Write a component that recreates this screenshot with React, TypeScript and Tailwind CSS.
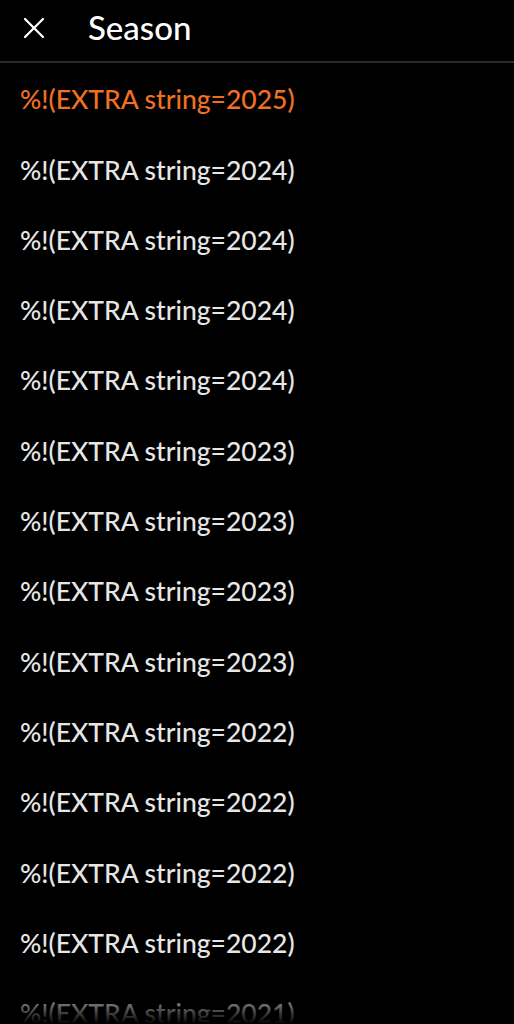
import { X } from 'lucide-react';

const seasons = [
  '2025', '2024', '2024', '2024', '2024', '2023', '2023', '2023', '2023',
  '2022', '2022', '2022', '2022', '2021', '2021',
];

export default function App() {
  return (
    <div className="relative h-[1024px] w-full overflow-hidden bg-black font-['Lato','Liberation_Sans',sans-serif]">
      <header className="flex h-[63px] items-center border-b-2 border-[#2a2a2a] pb-[6px]">
        <button type="button" className="ml-[16px] flex h-9 w-9 items-center justify-center text-white">
          <X size={36} strokeWidth={1.5} />
        </button>
        <h1 className="ml-[36px] text-[33px] font-medium text-white">Season</h1>
      </header>

      <ul className="pt-[2px]">
        {seasons.map((year, i) => (
          <li
            key={i}
            className={
              'flex h-[70.3px] items-center px-5 text-[26.5px] font-medium ' +
              (i === 0 ? 'text-[#f07022]' : 'text-[#e6e6e6]')
            }
          >
            %!(EXTRA string={year})
          </li>
        ))}
      </ul>

      <div className="pointer-events-none absolute inset-x-0 bottom-0 h-[40px] bg-gradient-to-b from-transparent to-black" />
    </div>
  );
}
